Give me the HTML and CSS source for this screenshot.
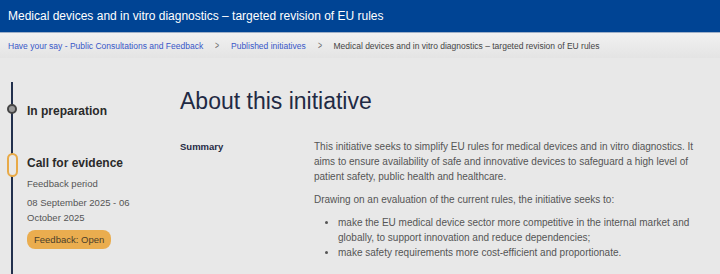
FILE: index.html
```html
<!DOCTYPE html>
<html lang="en">
<head>
  <meta charset="UTF-8" />
  <title>Medical devices and in vitro diagnostics – targeted revision of EU rules</title>
  <link rel="stylesheet" href="styles.css">
</head>
<body>
  <header class="topbar">
    <h1>Medical devices and in vitro diagnostics – targeted revision of EU rules</h1>
  </header>

  <nav class="crumbs">
    <a href="#">Have your say - Public Consultations and Feedback</a>
    <span class="sep">&gt;</span>
    <a href="#">Published initiatives</a>
    <span class="sep">&gt;</span>
    <span class="current">Medical devices and in vitro diagnostics – targeted revision of EU rules</span>
  </nav>

  <main class="page">
    <!-- Stage timeline -->
    <aside class="timeline">
      <div class="stage done">
        <span class="marker"></span>
        <h3>In preparation</h3>
      </div>
      <div class="stage active">
        <span class="marker"></span>
        <h3>Call for evidence</h3>
        <p class="muted">Feedback period</p>
        <p class="dates">08 September 2025 - 06 October 2025</p>
        <span class="badge">Feedback: Open</span>
      </div>
    </aside>

    <section class="about">
      <h2>About this initiative</h2>
      <div class="row">
        <div class="label">Summary</div>
        <div class="text">
          <p>This initiative seeks to simplify EU rules for medical devices and in vitro diagnostics. It aims to ensure availability of safe and innovative devices to safeguard a high level of patient safety, public health and healthcare.</p>
          <p>Drawing on an evaluation of the current rules, the initiative seeks to:</p>
          <ul>
            <li>make the EU medical device sector more competitive in the internal market and globally, to support innovation and reduce dependencies;</li>
            <li>make safety requirements more cost-efficient and proportionate.</li>
          </ul>
        </div>
      </div>
    </section>
  </main>
</body>
</html>
```

FILE: styles.css
```css
* {
  box-sizing: border-box;
}

body {
  margin: 0;
  height: 274px;
  background-color: #e8e8e8;
  font-family: "Liberation Sans", Arial, sans-serif;
  color: #404040;
  overflow: hidden;
}

/* Blue title bar */
.topbar {
  background-color: #004494;
  height: 33px;
  padding: 0 8px;
  display: flex;
  align-items: center;
  border-bottom: 1px solid #9fb0c8;
}
.topbar h1 {
  margin: 0;
  font-size: 12px;
  font-weight: normal;
  color: #fff;
}

/* Breadcrumb */
.crumbs {
  height: 25px;
  padding: 0 8px;
  display: flex;
  align-items: center;
  gap: 11px;
  font-size: 8.5px;
  background: linear-gradient(#f1f1f1, #e4e4e4);
}
.crumbs a {
  color: #3857c8;
  text-decoration: none;
}
.crumbs .sep {
  color: #6a6a6a;
  font-size: 10px;
  transform: scaleX(0.7);
}
.crumbs .current {
  color: #444;
}

.page {
  display: flex;
  padding-top: 24px;
}

/* Timeline column */
.timeline {
  width: 180px;
  flex-shrink: 0;
  padding-left: 12px;
  position: relative;
}
.timeline:before {
  content: "";
  position: absolute;
  left: 11px;
  top: 0;
  bottom: -200px;
  width: 2px;
  background: #22304d;
}
.stage {
  position: relative;
  padding-left: 15px;
}
.stage h3 {
  margin: 0;
  font-size: 12px;
  line-height: 14px;
  font-weight: bold;
  color: #2a2a2a;
}
.stage .marker {
  position: absolute;
  background: #e8e8e8;
}
.stage.done {
  padding-top: 22px;
  height: 74px;
}
.stage.done .marker {
  left: -5px;
  top: 22px;
  width: 10px;
  height: 10px;
  border-radius: 50%;
  border: 2px solid #444;
  background: #9a9a9a;
}
.stage.active .marker {
  left: -5px;
  top: -3px;
  width: 11px;
  height: 24px;
  border-radius: 6px;
  border: 2px solid #e8aa48;
}
.stage .muted,
.stage .dates {
  margin: 6px 0 0;
  font-size: 9.5px;
  color: #555;
  line-height: 15px;
  width: 120px;
}
.stage .dates {
  margin-top: 4px;
}
.badge {
  display: inline-block;
  margin-top: 5px;
  padding: 3px 7px;
  background: #eaad4f;
  color: #4a3d2a;
  border-radius: 8px;
  font-size: 9.5px;
  line-height: 13px;
}

/* About section */
.about {
  flex: 1;
  padding-right: 10px;
}
.about h2 {
  margin: 6px 0 0;
  font-size: 23px;
  font-weight: normal;
  color: #1f2a44;
}
.row {
  display: flex;
  margin-top: 24px;
}
.label {
  width: 134px;
  flex-shrink: 0;
  font-size: 9.5px;
  font-weight: bold;
  color: #1f2a44;
  line-height: 15px;
}
.text {
  width: 396px;
  font-size: 10px;
  line-height: 15px;
  color: #555;
}
.text p {
  margin: 0 0 8px;
}
.text ul {
  margin: 0;
  padding-left: 24px;
}
```
